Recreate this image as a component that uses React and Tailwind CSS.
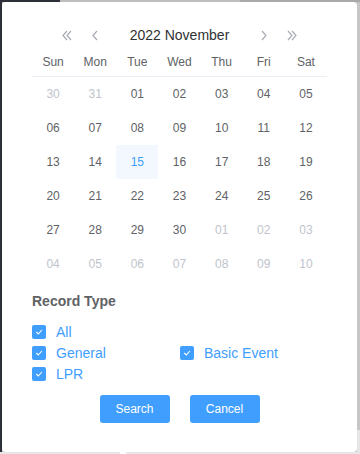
import React from "react";

const weekDays = ["Sun", "Mon", "Tue", "Wed", "Thu", "Fri", "Sat"];

// 6 rows of [label, inCurrentMonth]
const days = [
  ["30", 0], ["31", 0], ["01", 1], ["02", 1], ["03", 1], ["04", 1], ["05", 1],
  ["06", 1], ["07", 1], ["08", 1], ["09", 1], ["10", 1], ["11", 1], ["12", 1],
  ["13", 1], ["14", 1], ["15", 1], ["16", 1], ["17", 1], ["18", 1], ["19", 1],
  ["20", 1], ["21", 1], ["22", 1], ["23", 1], ["24", 1], ["25", 1], ["26", 1],
  ["27", 1], ["28", 1], ["29", 1], ["30", 1], ["01", 0], ["02", 0], ["03", 0],
  ["04", 0], ["05", 0], ["06", 0], ["07", 0], ["08", 0], ["09", 0], ["10", 0],
];

function Chevron({ dir = "left", double = false }) {
  const one = dir === "left" ? "M5 1 L1 5.5 L5 10" : "M1 1 L5 5.5 L1 10";
  const two = dir === "left" ? "M9 1 L5 5.5 L9 10" : "M5 1 L9 5.5 L5 10";
  return (
    <svg width={double ? 10 : 6} height="11" viewBox={double ? "0 0 10 11" : "0 0 6 11"} fill="none">
      <path d={one} stroke="#a8abb2" strokeWidth="1.2" />
      {double && <path d={two} stroke="#a8abb2" strokeWidth="1.2" />}
    </svg>
  );
}

function Check({ label }) {
  return (
    <label className="flex items-center gap-[10px] h-[21px]">
      <span className="w-[14px] h-[14px] rounded-[2px] bg-[#409eff] flex items-center justify-center">
        <svg width="10" height="10" viewBox="0 0 10 10" fill="none">
          <path d="M2.3 5 L4.3 7 L7.8 3" stroke="#fff" strokeWidth="1.1" />
        </svg>
      </span>
      <span className="text-[14px] text-[#409eff] leading-none">{label}</span>
    </label>
  );
}

export default function App() {
  return (
    <div
      className="w-[360px] h-[454px] flex flex-col bg-[#c6c6c6]"
      style={{ fontFamily: '"Liberation Sans", Arial, sans-serif' }}
    >
      {/* top strip of the page behind the popover */}
      <div className="flex h-[2px] shrink-0">
        <div className="w-[60px] bg-[#2d3038]" />
        <div className="w-[180px] bg-[#bdbdbd]" />
        <div className="flex-1 bg-[#a9a9a9]" />
      </div>
      <div className="flex flex-1">
        <div className="w-[2px] bg-[#2d3038]" />
        <div className="w-[355px] bg-white rounded-[4px] pt-[20px] px-[30px] flex flex-col">
          {/* header */}
          <div className="h-[26px] flex items-center px-[28px]">
            <span className="w-[14px] flex justify-center"><Chevron double /></span>
            <span className="w-[14px] ml-[14px] flex justify-center"><Chevron /></span>
            <span className="flex-1 text-center text-[14px] text-[#303133]">2022 November</span>
            <span className="w-[14px] mr-[14px] flex justify-center"><Chevron dir="right" /></span>
            <span className="w-[14px] flex justify-center"><Chevron dir="right" double /></span>
          </div>

          {/* week days */}
          <div className="grid grid-cols-7 h-[29px] border-b border-[#ebeef5]">
            {weekDays.map((d) => (
              <div key={d} className="flex items-center justify-center text-[12px] text-[#606266]">
                {d}
              </div>
            ))}
          </div>

          {/* days */}
          <div className="grid grid-cols-7">
            {days.map(([n, cur], i) => {
              const today = i === 16;
              return (
                <div
                  key={i}
                  className={
                    "h-[34px] flex items-center justify-center text-[12px] " +
                    (today ? "bg-[#f2f8fe] text-[#409eff]" : cur ? "text-[#606266]" : "text-[#c0c4cc]")
                  }
                >
                  {n}
                </div>
              );
            })}
          </div>

          <div className="mt-[10px] text-[14px] font-bold text-[#606266] leading-[20px]">Record Type</div>

          <div className="mt-[10px] grid grid-cols-[148px_1fr]">
            <Check label="All" />
            <div />
            <Check label="General" />
            <Check label="Basic Event" />
            <Check label="LPR" />
          </div>

          <div className="mt-[11px] flex justify-center gap-[20px]">
            <button className="w-[70px] h-[28px] rounded-[3px] bg-[#409eff] text-white text-[12px]">Search</button>
            <button className="w-[70px] h-[28px] rounded-[3px] bg-[#409eff] text-white text-[12px]">Cancel</button>
          </div>
        </div>
        <div className="flex-1 flex flex-col">
          <div className="flex-1 bg-[#c6c6c6]" />
          <div className="h-[22px] bg-[#e6e6e6]" />
        </div>
      </div>
      <div className="flex h-[2px] shrink-0">
        <div className="w-[120px] bg-[#e6e6e6]" />
        <div className="w-[6px] bg-white" />
        <div className="flex-1 bg-[#e6e6e6]" />
      </div>
    </div>
  );
}
